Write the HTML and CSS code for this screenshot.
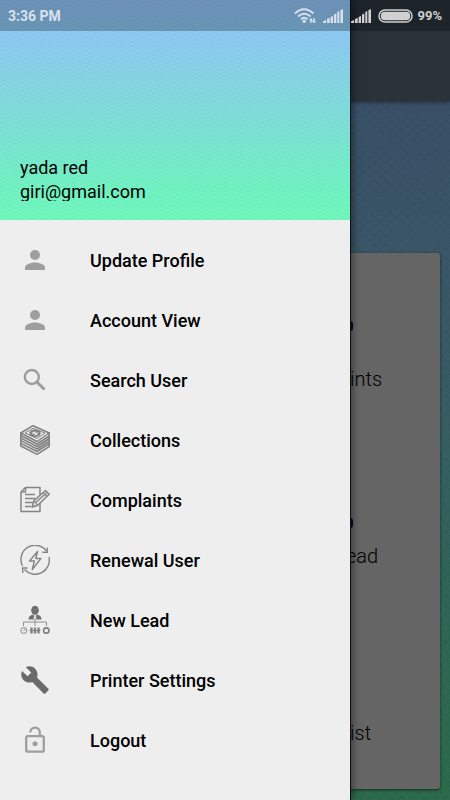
FILE: index.html
```html
<!DOCTYPE html>
<html lang="en">
<head>
<meta charset="utf-8">
<meta name="viewport" content="width=device-width, initial-scale=1">
<title>Account menu</title>
<link rel="stylesheet" href="styles.css">
</head>
<body>
<div class="status">
  <span class="time">3:36 PM</span>
  <svg class="wifi" width="22" height="16" viewBox="0 0 22 16" fill="none" stroke="currentColor" stroke-width="2"><path d="M1 5.500Q10 -3 19.500 5.500M4 8.500Q10.200 3 16.500 8.500M7 11.300Q10.200 8.300 13.500 11.300"/><circle cx="10.200" cy="13.300" r="1.700" fill="currentColor" stroke="none"/><path d="M17 10v5M20 10v5M15.500 12h3M18.500 13.500h3" stroke-width="1.300"/></svg>
  <svg class="signal" width="20" height="14" viewBox="0 0 20 14" fill="currentColor"><path d="M0 14v-1.500l3-1.500v3zM4 14v-4l2.700-1v5zM7.600 14V8l2.400-1v7zM11 14V5.500L13.300 4.500V14zM14.300 14V3l2-1v12zM17.400 14V1.200L20 0v14z"/></svg>
  <svg class="signal" width="20" height="14" viewBox="0 0 20 14" fill="currentColor"><path d="M0 14v-1.500l3-1.500v3zM4 14v-4l2.700-1v5zM7.600 14V8l2.400-1v7zM11 14V5.500L13.300 4.500V14zM14.300 14V3l2-1v12zM17.400 14V1.200L20 0v14z"/></svg>
  <svg class="battery" width="35" height="14" viewBox="0 0 35 14"><rect x="1" y="1" width="33" height="12" rx="6" fill="none" stroke="currentColor" stroke-width="1.500"/><rect x="2.800" y="2.800" width="29.400" height="8.400" rx="4" fill="currentColor"/></svg>
  <span class="percent">99%</span>
</div>
<div class="screen">
  <aside class="drawer">
    <header class="profile">
      <div class="name">yada red</div>
      <div class="email">giri@gmail.com</div>
    </header>
    <nav class="menu">
      <a href="#"><svg viewBox="0 0 30 30" fill="#9e9e9e"><circle cx="15" cy="10" r="5"/><path d="M5 25v-2.500c0-3.300 6.700-5 10-5s10 1.700 10 5V25z"/></svg>Update Profile</a>
      <a href="#"><svg viewBox="0 0 30 30" fill="#9e9e9e"><circle cx="15" cy="10" r="5"/><path d="M5 25v-2.500c0-3.300 6.700-5 10-5s10 1.700 10 5V25z"/></svg>Account View</a>
      <a href="#"><svg viewBox="0 0 30 30" fill="none" stroke="#9e9e9e"><circle cx="11.800" cy="12" r="7" stroke-width="2.400"/><path d="M16.500 16.500l8 8" stroke-width="3"/></svg>Search User</a>
      <a href="#"><svg viewBox="0 0 30 30" fill="#eee" stroke="#808080" stroke-width="1.500" stroke-linejoin="round"><path d="M.8 8v13L17 29.300 29.200 21.500V8z"/><path d="M.8 18.300L17 26.500l12.200-8M.8 15.700L17 24l12.200-8M.8 13.100l16.200 8.400 12.200-8M.8 10.500L17 19l12.200-8" fill="none"/><path d="M.8 8L13 .7 29.200 8 17 16.500z"/><path d="M5 8l8-4.700L25 8l-8 5.500z" stroke-width="1"/><ellipse cx="15" cy="8.200" rx="5" ry="3" fill="#8c8c8c"/><path d="M12.500 8.500q2-2.500 2.500 0t2.500-1" fill="none" stroke="#eee"/></svg>Collections</a>
      <a href="#"><svg viewBox="0 0 30 30" fill="none" stroke="#858585" stroke-width="1.500" stroke-linejoin="round"><path d="M5.500 2.500H20V26.500H1V7z"/><path d="M5.500 2.500V7H1" /><path d="M5 9.500h10M5 13.500h10M5 17.500h9M5 21.500h6"/><path d="M12 22l2-6.500L25.500 5.500l3.700 3.700L17.500 20.500z" fill="#e3e3e3"/><path d="M14 15.500l3.500 5M23 7.500l4 4M15.500 17.500L27 7.500M12 22l3-1" stroke-width="1.200"/></svg>Complaints</a>
      <a href="#"><svg viewBox="0 0 30 30" fill="none" stroke="#858585" stroke-width="1.400"><path d="M2.500 21A14.200 14.200 0 0 1 26.500 6M29 12A14.200 14.200 0 0 1 4.500 24.500"/><path d="M27.300 2.500V7.300h-5M2.700 28v-5h5"/><path d="M17.500 6.500L9.500 16h4.800l-2 8.500L20.800 13.500h-5z" stroke-linejoin="round"/></svg>Renewal User</a>
      <a href="#"><svg viewBox="0 0 30 30" fill="#707070"><path d="M8.500 14.500c0-3 1.500-4 4.500-5L15 12l2-2.500c3 1 4.500 2 4.500 5z"/><ellipse cx="15" cy="5.300" rx="3.800" ry="4.600"/><path d="M14.200 10.500h1.600l.8 4h-3.200z" fill="#ddd"/><path d="M15 14v7M3.500 21v-4h23v4" fill="none" stroke="#909090"/><circle cx="3.800" cy="25.500" r="3" fill="none" stroke="#858585"/><path d="M3.500 26l1.700-2" stroke="#858585"/><path d="M11.500 22.500v6M15 22.500v6M18.500 22.500v6" stroke="#808080" stroke-width="2.300"/><path d="M9.500 25.500h11" stroke="#808080"/><circle cx="26.300" cy="25.500" r="2.700" fill="none" stroke="#808080" stroke-width="1.700"/></svg>New Lead</a>
      <a href="#"><svg viewBox="0 0 24 24" fill="#6b6b6b"><path d="M22.700 19l-9.100-9.100c.9-2.300.4-5-1.500-6.900-2-2-5-2.400-7.400-1.300L9 6 6 9 1.600 4.700C.4 7.100.9 10.100 2.900 12.100c1.900 1.900 4.600 2.400 6.900 1.500l9.100 9.100c.4.400 1 .4 1.400 0l2.300-2.300c.5-.4.500-1.100.1-1.400z"/></svg>Printer Settings</a>
      <a href="#"><svg viewBox="0 0 30 30" fill="none" stroke="#9e9e9e" stroke-width="2.300"><rect x="6.200" y="11.200" width="17.600" height="15.500" rx="1.500"/><path d="M10.200 7.500C10.500 1 19.800 1 19.800 7.500V11"/><circle cx="15" cy="18.800" r="2.500" fill="#9e9e9e" stroke="none"/></svg>Logout</a>
    </nav>
  </aside>
  <main class="page">
    <div class="appbar"></div>
    <section class="card">
      <div class="tile"><i class="dot"></i><span>ints</span></div>
      <div class="tile compact"><i class="dot"></i><span>ead</span></div>
      <div class="tile"><span>ist</span></div>
    </section>
  </main>
</div>
</body>
</html>
```
FILE: styles.css
```css
* {
  box-sizing: border-box;
}

body {
  margin: 0;
  font-family: Roboto, "Liberation Sans", sans-serif;
  color: #000;
}

.status {
  position: absolute;
  z-index: 3;
  top: 0;
  left: 0;
  right: 0;
  height: 31px;
  padding: 0 8px;
  display: flex;
  align-items: center;
  background: rgba(0, 0, 0, 0.25);
  color: #d9e2ec;
  font-size: 14px;
  font-weight: 700;
}

.time {
  margin-right: auto;
}

.wifi {
  margin-right: 7px;
}

.signal {
  margin-right: 8px;
}

.battery {
  margin-right: 4px;
}

.signal + .signal,
.battery,
.percent {
  color: #d0d0d0;
}

.signal + .signal {
  margin-right: 7px;
}

.percent {
  font-size: 13px;
}

.screen {
  display: flex;
  min-height: 100vh;
}

.drawer {
  position: relative;
  z-index: 2;
  flex: 0 0 350px;
  background: #eee;
  box-shadow: 1px 0 0 #101018, 2px 0 8px rgba(0, 0, 0, 0.5);
}

.profile {
  height: 220px;
  padding: 156px 20px 0;
  font-size: 18px;
  line-height: 24px;
  background:
    repeating-linear-gradient(20deg, rgba(0, 40, 80, 0.02) 0 1px, transparent 1px 4px),
    repeating-linear-gradient(160deg, rgba(0, 40, 80, 0.02) 0 1px, transparent 1px 4px),
    linear-gradient(#91c3f6 0, #8ccaf0 40px, #80dcda 110px, #72f0c4 180px, #70f8bc 220px);
}

.email {
  height: 21px;
  overflow: hidden;
}

.menu {
  padding: 10px 0 20px;
}

.menu a {
  display: flex;
  align-items: center;
  gap: 40px;
  height: 60px;
  padding: 0 20px;
  color: #000;
  font-size: 18px;
  font-weight: 500;
  text-decoration: none;
}

.menu svg {
  width: 30px;
  height: 30px;
}

.page {
  flex: 1;
  display: flex;
  flex-direction: column;
  min-width: 0;
  padding-bottom: 11px;
  background:
    repeating-linear-gradient(40deg, rgba(0, 0, 0, 0.05) 0 1px, transparent 1px 7px),
    repeating-linear-gradient(140deg, rgba(0, 0, 0, 0.04) 0 1px, transparent 1px 7px),
    linear-gradient(#3a5068 100px, #3a5667 250px, #375e63 430px, #2f6556 600px, #2c6b4b 800px);
}

.appbar {
  height: 101px;
  background: #283238;
  box-shadow: 0 1px 4px rgba(0, 0, 0, 0.5);
}

.card {
  flex: 1;
  margin: 152px 10px 0 0;
  padding-bottom: 5px;
  display: grid;
  grid-template-rows: repeat(3, 1fr);
  background: #656565;
  border-radius: 0 3px 3px 0;
  box-shadow: 0 1px 3px rgba(0, 0, 0, 0.6);
}

.tile {
  display: flex;
  flex-direction: column;
  justify-content: flex-end;
  gap: 36px;
  padding-bottom: 39px;
  font-size: 20px;
  font-weight: 300;
  line-height: 24px;
}

.compact {
  gap: 16px;
}

.compact span {
  margin-left: -4px;
}

.dot {
  width: 3px;
  height: 10px;
  border-radius: 0 5px 5px 0;
  background: #080828;
}
```
